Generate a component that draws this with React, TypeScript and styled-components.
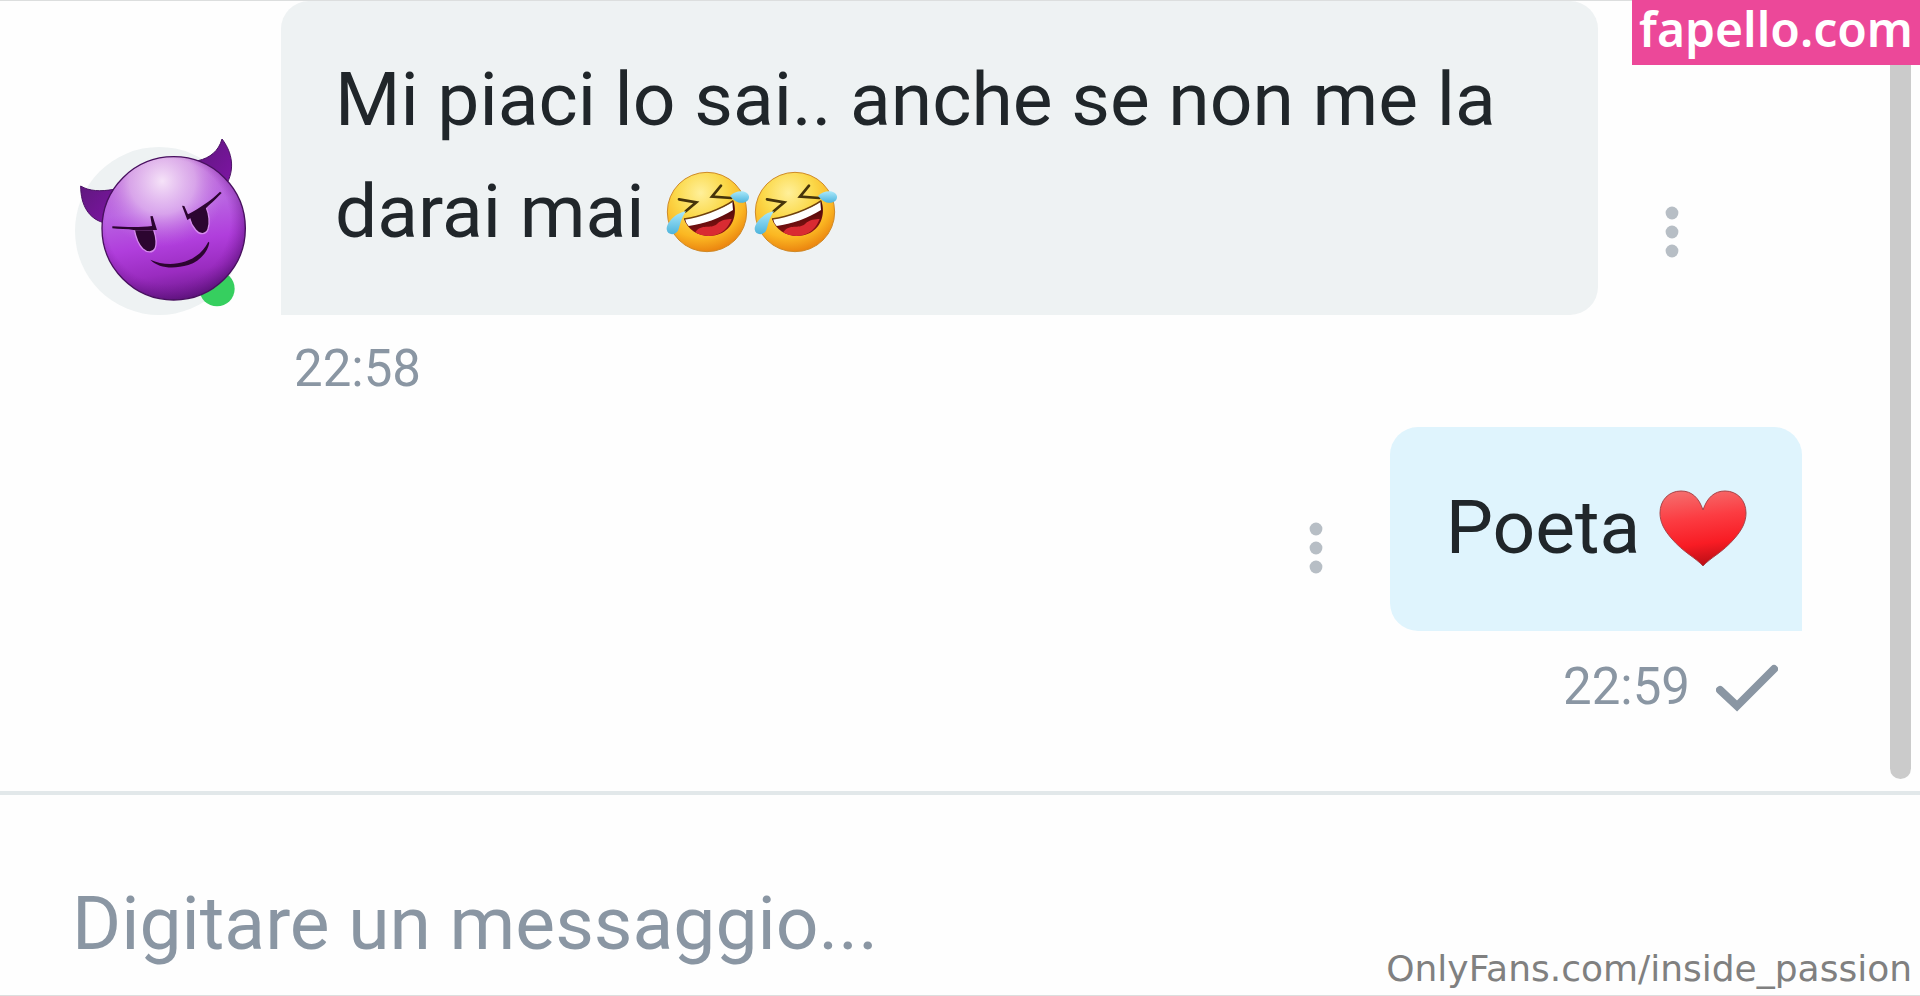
import React from 'react';
import styled, { createGlobalStyle } from 'styled-components';

const GlobalStyle = createGlobalStyle`
  *, *::before, *::after { box-sizing: border-box; }
  body {
    margin: 0;
    background: #fefefe;
    color: #20262a;
    font-family: Roboto, "Liberation Sans", sans-serif;
  }
`;

const Page = styled.div`
  position: relative;
  display: flex;
  flex-direction: column;
  min-height: 100vh;
  border-top: 1px solid #dcdede;
  border-bottom: 1px solid #dcdede;
`;

const Chat = styled.main`
  display: flex;
  flex: 1;
  border-bottom: 4px solid #e2e8ea;
`;

const Messages = styled.div`
  display: flex;
  flex: 1;
  min-width: 0;
  flex-direction: column;
  gap: 28px;
`;

const ScrollThumb = styled.div`
  width: 21px;
  margin: 0 9px 12px 0;
  border-radius: 0 0 11px 11px;
  background: #cbcbcb;
`;

const Message = styled.article<{ $own?: boolean }>`
  display: flex;
  flex-direction: column;
  align-items: ${(p) => (p.$own ? 'flex-end' : 'stretch')};
  padding: ${(p) => (p.$own ? '0 88px 0 75px' : '0 144px 0 75px')};
`;

const MessageRow = styled.div`
  display: flex;
  align-items: flex-end;
`;

const Bubble = styled.p<{ $own?: boolean }>`
  flex: 1;
  margin: 0;
  padding: ${(p) => (p.$own ? '44px 55px 48px 56px' : '42px 55px 48px 54px')};
  border-radius: ${(p) => (p.$own ? '28px 28px 0 28px' : '28px 28px 28px 0')};
  background: ${(p) => (p.$own ? '#dff4fd' : '#eef2f3')};
  font-size: 75px;
  line-height: 112px;
`;

const Avatar = styled.svg`
  flex: none;
  width: 168px;
  height: 168px;
  margin-right: 38px;
  overflow: visible;
`;

const Emoji = styled.svg`
  width: 88px;
  height: 88px;
  vertical-align: -19px;
  overflow: visible;
`;

const MenuButton = styled.button`
  display: flex;
  flex: none;
  align-items: center;
  justify-content: center;
  width: 148px;
  height: 166px;
  padding: 0;
  border: 0;
  background: none;
  cursor: pointer;
`;

const Meta = styled.div<{ $own?: boolean }>`
  display: flex;
  align-items: center;
  gap: 26px;
  margin-top: ${(p) => (p.$own ? '26px' : '24px')};
  padding: ${(p) => (p.$own ? '0 24px 0 0' : '0 0 0 219px')};
  color: #8a96a3;
  font-size: 51px;
  line-height: 60px;
`;

const Composer = styled.form`
  display: flex;
  align-items: center;
  height: 200px;
  padding: 56px 72px 0;
`;

const ComposerInput = styled.input`
  width: 100%;
  height: 112px;
  padding: 0;
  border: 0;
  outline: 0;
  background: transparent;
  color: #20262a;
  font: 75px Roboto, "Liberation Sans", sans-serif;

  &::placeholder {
    color: #8a96a3;
    opacity: 1;
  }
`;

const SiteBadge = styled.a`
  position: absolute;
  top: -1px;
  right: 0;
  display: flex;
  justify-content: center;
  width: 288px;
  height: 65px;
  background: #ec4899;
  color: #fff;
  font: 600 48px/58px "Noto Sans", "Open Sans", sans-serif;
  text-decoration: none;
`;

const Credit = styled.a`
  position: absolute;
  right: 8px;
  bottom: 5px;
  color: #808080;
  font: 36px/42px "DejaVu Sans", sans-serif;
  text-decoration: none;
`;

const DotsMenu = () => (
  <MenuButton type="button" aria-label="Altre opzioni">
    <svg width="14" height="52" viewBox="0 0 14 52" fill="#b7bec5" aria-hidden="true">
      <circle cx="7" cy="7" r="6.4" />
      <circle cx="7" cy="26" r="6.4" />
      <circle cx="7" cy="45" r="6.4" />
    </svg>
  </MenuButton>
);

const DevilAvatar = () => (
  <Avatar viewBox="45 81 504 504" role="img" aria-label="Avatar, online">
    <defs>
      <linearGradient id="devilBody" x1="0.42" y1="0" x2="0.58" y2="1">
        <stop offset="0" stopColor="#b65fd0" />
        <stop offset="0.35" stopColor="#b964e2" />
        <stop offset="0.6" stopColor="#b03edc" />
        <stop offset="0.8" stopColor="#9a2cc0" />
        <stop offset="1" stopColor="#6c188c" />
      </linearGradient>
      <radialGradient id="devilShine" cx="0.42" cy="0.17" r="0.46">
        <stop offset="0" stopColor="#fbeefb" stopOpacity="0.92" />
        <stop offset="0.5" stopColor="#eccdf3" stopOpacity="0.62" />
        <stop offset="1" stopColor="#c678e4" stopOpacity="0" />
      </radialGradient>
      <radialGradient id="devilEdge" cx="0.46" cy="0.45" r="0.57">
        <stop offset="0.76" stopColor="#7c189c" stopOpacity="0" />
        <stop offset="1" stopColor="#4a0c68" stopOpacity="0.6" />
      </radialGradient>
      <linearGradient id="devilHorn" x1="0" y1="0" x2="1" y2="1">
        <stop offset="0" stopColor="#60187f" />
        <stop offset="1" stopColor="#7d14a3" />
      </linearGradient>
    </defs>
    <circle cx="297" cy="333" r="252" fill="#eef2f3" />
    <circle cx="471" cy="506" r="53" fill="#36cf5f" />
    <g fill="url(#devilHorn)" stroke="#4c1266" strokeWidth="3">
      <path d="M62 198C88 214 121 215 162 208L128 307C90 296 62 260 62 198Z" />
      <path d="M414 122C450 114 476 93 486 57C510 88 528 136 502 188Z" />
    </g>
    <circle cx="341" cy="325" r="215" fill="url(#devilBody)" />
    <circle cx="341" cy="325" r="215" fill="url(#devilShine)" />
    <circle cx="341" cy="325" r="215" fill="url(#devilEdge)" stroke="#48105f" strokeWidth="4" />
    <g stroke="#d68bee" strokeWidth="4" fill="#2c0530" strokeLinejoin="round">
      <path d="M223 329L281 329C288 350 290 374 285 386C278 399 262 399 248 386C235 373 227 351 223 329Z" />
      <path d="M388 292L438 260C447 281 451 310 444 328C437 345 419 345 407 330C398 319 391 306 388 292Z" />
    </g>
    <g fill="#2c0530">
      <path d="M157 319C195 321 238 323 276 318L271 289L278 288L291 330L225 331C201 326 176 328 157 325Z" />
      <path d="M366 257L373 258L384 283C419 264 453 242 480 215L485 219C464 241 448 254 435 268L382 300Z" />
      <path d="M271 419C329 446 413 431 445 365L448 368C443 398 417 425 385 435C340 448 296 445 271 419Z" />
    </g>
  </Avatar>
);

const LaughEmoji = () => (
  <Emoji viewBox="69 54 264 264" role="img" aria-label="Risata a crepapelle">
    <defs>
      <radialGradient id="laughFace" cx="0.42" cy="0.26" r="0.78">
        <stop offset="0" stopColor="#fff09a" />
        <stop offset="0.4" stopColor="#fbd94b" />
        <stop offset="0.72" stopColor="#fbb722" />
        <stop offset="1" stopColor="#e87b0c" />
      </radialGradient>
      <linearGradient id="laughTear" x1="0" y1="0" x2="0" y2="1">
        <stop offset="0" stopColor="#a9e8fa" />
        <stop offset="1" stopColor="#4db4dc" />
      </linearGradient>
      <linearGradient id="laughMouth" x1="0" y1="0" x2="0.3" y2="1">
        <stop offset="0.4" stopColor="#4a0808" />
        <stop offset="1" stopColor="#8d1414" />
      </linearGradient>
    </defs>
    <circle cx="201" cy="186" r="119" fill="url(#laughFace)" stroke="#cf8a28" strokeWidth="3" />
    <path d="M132 207C180 200 243 178 280 152C292 188 282 230 246 249C201 271 147 251 132 207Z" fill="url(#laughMouth)" />
    <path d="M166 247C184 219 212 239 231 222C246 207 263 208 275 207C265 232 249 249 226 255C204 261 181 257 166 247Z" fill="#d92b32" />
    <path d="M135 206C180 200 240 179 277 155L279 180C238 206 192 222 146 228Q137 218 135 206Z" fill="#fff" />
    <path d="M132 207C180 200 243 178 280 152" fill="none" stroke="#70420d" strokeWidth="5" />
    <g fill="none" stroke="#46340a" strokeWidth="8" strokeLinecap="round" strokeLinejoin="miter">
      <path d="M117 148L169 157L137 184" />
      <path d="M243 107L216 140L274 144" />
    </g>
    <path d="M138 184C111 187 80 215 80 238C82 257 108 257 115 240C121 222 125 201 138 184Z" fill="url(#laughTear)" />
    <path d="M270 138C286 120 322 118 327 139C329 158 304 164 286 153C279 148 275 143 270 138Z" fill="url(#laughTear)" />
  </Emoji>
);

const HeartEmoji = () => (
  <Emoji viewBox="0 0 88 88" role="img" aria-label="Cuore rosso">
    <defs>
      <linearGradient id="heartFill" x1="0.4" y1="0" x2="0.55" y2="1">
        <stop offset="0" stopColor="#f56b6b" />
        <stop offset="0.35" stopColor="#fc3c42" />
        <stop offset="0.7" stopColor="#f81c24" />
        <stop offset="1" stopColor="#b80d14" />
      </linearGradient>
    </defs>
    <path
      d="M44 82C37 74 24 68 13 55C5 46 1 38 1 29C1 16 10 7 22 7C33 7 40 14 44 26C48 14 55 7 66 7C78 7 87 16 87 29C87 38 83 46 75 55C64 68 51 74 44 82Z"
      fill="url(#heartFill)"
      stroke="#a84449"
      strokeWidth="1"
    />
  </Emoji>
);

const SentCheck = () => (
  <svg width="62" height="56" viewBox="0 0 62 56" role="img" aria-label="Inviato">
    <path d="M4 31L21 47L58 10" fill="none" stroke="#8a96a3" strokeWidth="8" strokeLinecap="round" />
  </svg>
);

export default function App() {
  return (
    <>
      <GlobalStyle />
      <Page>
        <Chat>
          <Messages>
            <Message>
              <MessageRow>
                <DevilAvatar />
                <Bubble>
                  Mi piaci lo sai.. anche se non me la darai mai <LaughEmoji />
                  <LaughEmoji />
                </Bubble>
                <DotsMenu />
              </MessageRow>
              <Meta>
                <time dateTime="22:58">22:58</time>
              </Meta>
            </Message>
            <Message $own>
              <MessageRow>
                <DotsMenu />
                <Bubble $own>
                  Poeta <HeartEmoji />
                </Bubble>
              </MessageRow>
              <Meta $own>
                <time dateTime="22:59">22:59</time>
                <SentCheck />
              </Meta>
            </Message>
          </Messages>
          <ScrollThumb aria-hidden="true" />
        </Chat>
        <Composer onSubmit={(e: React.FormEvent) => e.preventDefault()}>
          <ComposerInput type="text" aria-label="Messaggio" placeholder="Digitare un messaggio..." />
        </Composer>
        <SiteBadge href="#">fapello.com</SiteBadge>
        <Credit href="#">OnlyFans.com/inside_passion</Credit>
      </Page>
    </>
  );
}
